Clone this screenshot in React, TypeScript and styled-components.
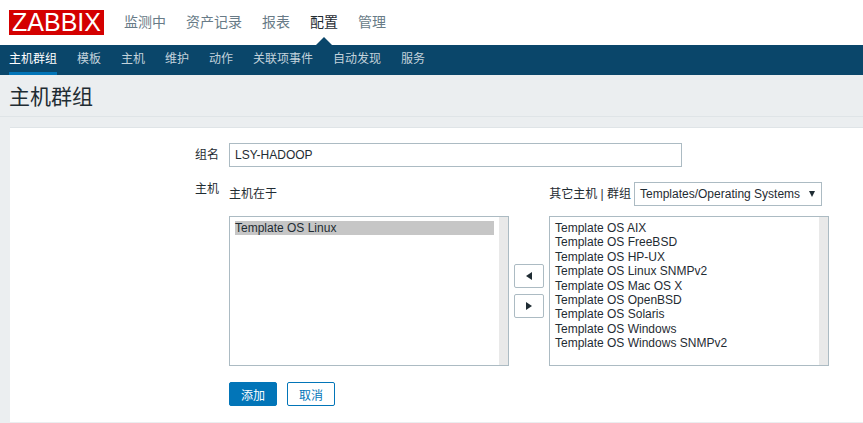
import React from 'react'
import styled, { createGlobalStyle } from 'styled-components'

const GlobalStyle = createGlobalStyle`
  html, body {
    margin: 0;
    padding: 0;
    height: 100%;
    overflow: hidden;
    background: #ebeef0;
    color: #1f2c33;
    font-family: "Liberation Sans", "Noto Sans CJK SC", sans-serif;
    font-size: 12px;
  }
  * { box-sizing: border-box; }
`

const TopBar = styled.header`
  height: 45px;
  background: #fff;
  display: flex;
  align-items: flex-start;
  padding-left: 9px;
`

const Logo = styled.div`
  width: 95px;
  height: 25px;
  margin-top: 10px;
  background: #d40000;
  color: #fff;
  font-size: 25px;
  line-height: 25px;
  text-align: center;
`

const TopMenu = styled.nav`
  display: flex;
  gap: 20px;
  margin-left: 20px;
  height: 45px;
`

const TopItem = styled.a<{ $active?: boolean }>`
  position: relative;
  font-size: 14px;
  line-height: 44px;
  color: ${p => (p.$active ? '#1f2c33' : '#687b87')};
  ${p =>
    p.$active &&
    `
    &::after {
      content: '';
      position: absolute;
      left: 50%;
      bottom: 0;
      margin-left: -8px;
      border-left: 8px solid transparent;
      border-right: 8px solid transparent;
      border-bottom: 8px solid #0a466a;
    }
  `}
`

const SubNav = styled.nav`
  height: 30px;
  background: #0a466a;
  display: flex;
  gap: 20px;
  padding-left: 9px;
`

const SubItem = styled.a<{ $active?: boolean }>`
  height: 30px;
  font-size: 12px;
  line-height: 29px;
  color: ${p => (p.$active ? '#fff' : '#c3d3dc')};
  border-bottom: 3px solid ${p => (p.$active ? '#0275b8' : 'transparent')};
`

const PageHeader = styled.div`
  height: 42px;
  margin-bottom: 10px;
  border-bottom: 1px solid #dfe4e7;
  padding-left: 9px;
`

const Title = styled.h1`
  margin: 0;
  font-size: 21px;
  font-weight: 400;
  line-height: 44px;
  color: #1f2c33;
`

const Card = styled.main`
  margin-left: 10px;
  height: 295px;
  background: #fff;
  border-top: 1px solid #dfe4e7;
  padding-top: 15px;
`

const FormRow = styled.div<{ $gap: number }>`
  display: grid;
  grid-template-columns: 209px 1fr;
  column-gap: 10px;
  margin-bottom: ${p => p.$gap}px;
`

const Label = styled.label<{ $lineHeight: number }>`
  text-align: right;
  line-height: ${p => p.$lineHeight}px;
  color: #1f2c33;
`

const NameInput = styled.input`
  display: block;
  width: 453px;
  height: 24px;
  border: 1px solid #acbbc3;
  background: #fff;
  padding: 0 5px;
  font: inherit;
  color: #1f2c33;
  outline: none;
`

const Picker = styled.div`
  display: grid;
  grid-template-columns: 280px 40px 280px;
`

const ColumnHead = styled.div<{ $end?: boolean }>`
  height: 34px;
  display: flex;
  align-items: flex-start;
  gap: 3px;
  line-height: 24px;
  justify-content: ${p => (p.$end ? 'flex-end' : 'flex-start')};
  margin-right: ${p => (p.$end ? '7px' : '0')};
  margin-left: ${p => (p.$end ? '-100px' : '0')};
`

const Select = styled.div`
  width: 188px;
  height: 24px;
  border: 1px solid #acbbc3;
  padding-left: 5px;
  line-height: 22px;
  display: flex;
  justify-content: space-between;
  align-items: center;
`

const Caret = styled.svg`
  width: 6px;
  height: 6px;
  margin-right: 6px;
  fill: #1f2c33;
`

const ListBox = styled.div`
  height: 150px;
  border: 1px solid #acbbc3;
  padding: 4px 5px;
  position: relative;

  &::after {
    content: '';
    position: absolute;
    top: 0;
    right: 0;
    bottom: 0;
    width: 9px;
    background: #e9e9e9;
  }
`

const Option = styled.div<{ $selected?: boolean }>`
  height: 14.4px;
  line-height: 14.4px;
  width: 259px;
  white-space: nowrap;
  background: ${p => (p.$selected ? '#c6c6c6' : 'transparent')};
`

const MoveButtons = styled.div`
  display: flex;
  flex-direction: column;
  align-items: center;
  gap: 6px;
  padding-top: 48px;
`

const MoveButton = styled.button`
  width: 30px;
  height: 24px;
  padding: 0;
  display: flex;
  align-items: center;
  justify-content: center;
  background: #fff;
  border: 1px solid #acbbc3;
  border-radius: 2px;

  svg {
    width: 6px;
    height: 8px;
    fill: #1f2c33;
  }
`

const Actions = styled.div`
  display: flex;
  gap: 10px;
  margin-top: 16px;
`

const Button = styled.button<{ $primary?: boolean }>`
  width: 48px;
  height: 24px;
  padding: 0;
  font: inherit;
  border: 1px solid #0275b8;
  border-radius: 2px;
  background: ${p => (p.$primary ? '#0275b8' : '#fff')};
  color: ${p => (p.$primary ? '#fff' : '#0275b8')};
`

const topMenu = ['监测中', '资产记录', '报表', '配置', '管理']
const subMenu = ['主机群组', '模板', '主机', '维护', '动作', '关联项事件', '自动发现', '服务']
const otherHosts = [
  'Template OS AIX',
  'Template OS FreeBSD',
  'Template OS HP-UX',
  'Template OS Linux SNMPv2',
  'Template OS Mac OS X',
  'Template OS OpenBSD',
  'Template OS Solaris',
  'Template OS Windows',
  'Template OS Windows SNMPv2',
]

const App: React.FC = () => {
  return (
    <>
      <GlobalStyle />
      <TopBar>
        <Logo>ZABBIX</Logo>
        <TopMenu>
          {topMenu.map(item => (
            <TopItem key={item} $active={item === '配置'}>{item}</TopItem>
          ))}
        </TopMenu>
      </TopBar>
      <SubNav>
        {subMenu.map(item => (
          <SubItem key={item} $active={item === '主机群组'}>{item}</SubItem>
        ))}
      </SubNav>
      <PageHeader>
        <Title>主机群组</Title>
      </PageHeader>
      <Card>
        <FormRow $gap={15}>
          <Label $lineHeight={24}>组名</Label>
          <NameInput defaultValue="LSY-HADOOP" />
        </FormRow>
        <FormRow $gap={0}>
          <Label $lineHeight={14}>主机</Label>
          <div>
            <Picker>
              <ColumnHead>主机在于</ColumnHead>
              <div />
              <ColumnHead $end>
                其它主机 | 群组
                <Select>
                  Templates/Operating Systems
                  <Caret viewBox="0 0 6 6"><path d="M0 0h6L3 6z" /></Caret>
                </Select>
              </ColumnHead>
              <ListBox>
                <Option $selected>Template OS Linux</Option>
              </ListBox>
              <MoveButtons>
                <MoveButton>
                  <svg viewBox="0 0 6 8"><path d="M6 0v8L0 4z" /></svg>
                </MoveButton>
                <MoveButton>
                  <svg viewBox="0 0 6 8"><path d="M0 0v8l6-4z" /></svg>
                </MoveButton>
              </MoveButtons>
              <ListBox>
                {otherHosts.map(host => (
                  <Option key={host}>{host}</Option>
                ))}
              </ListBox>
            </Picker>
            <Actions>
              <Button $primary>添加</Button>
              <Button>取消</Button>
            </Actions>
          </div>
        </FormRow>
      </Card>
    </>
  )
}

export default App
